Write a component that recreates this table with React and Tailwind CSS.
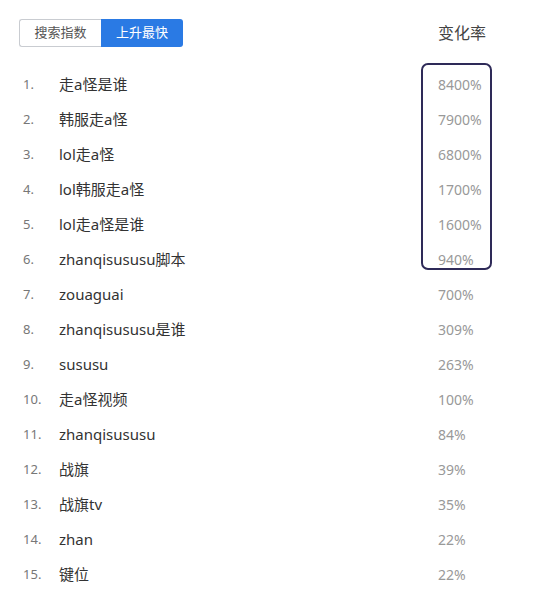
import React from "react";

const rows = [
  ["走a怪是谁", "8400%"],
  ["韩服走a怪", "7900%"],
  ["lol走a怪", "6800%"],
  ["lol韩服走a怪", "1700%"],
  ["lol走a怪是谁", "1600%"],
  ["zhanqisususu脚本", "940%"],
  ["zouaguai", "700%"],
  ["zhanqisususu是谁", "309%"],
  ["sususu", "263%"],
  ["走a怪视频", "100%"],
  ["zhanqisususu", "84%"],
  ["战旗", "39%"],
  ["战旗tv", "35%"],
  ["zhan", "22%"],
  ["键位", "22%"],
];

export default function App() {
  return (
    <div
      className="relative w-[533px] h-[604px] bg-white overflow-hidden"
      style={{ fontFamily: '"Noto Sans", "Noto Sans CJK SC", sans-serif' }}
    >
      <div className="flex items-center pt-[19px] pl-[19px]">
        <div className="flex h-[28px]">
          <div className="w-[82px] flex items-center justify-center border border-[#c9ccd1] border-r-0 rounded-l-[3px] text-[13px] text-[#555]">
            搜索指数
          </div>
          <div className="w-[82px] flex items-center justify-center bg-[#2a7ae4] rounded-r-[3px] text-[13px] text-white">
            上升最快
          </div>
        </div>
        <div className="ml-[255px] text-[16px] text-[#444] leading-none">变化率</div>
      </div>

      <div className="mt-[20px]">
        {rows.map(([k, v], i) => (
          <div key={i} className="flex items-center h-[35px]">
            <div className="w-[59px] pl-[23px] text-[13px] text-[#777]">{i + 1}.</div>
            <div className="w-[379px] text-[15px] text-[#333]">{k}</div>
            <div className="text-[14px] text-[#999]">{v}</div>
          </div>
        ))}
      </div>

      <div className="absolute left-[421px] top-[63px] w-[71px] h-[207px] border-2 border-[#2e2a58] rounded-[7px]" />
    </div>
  );
}
